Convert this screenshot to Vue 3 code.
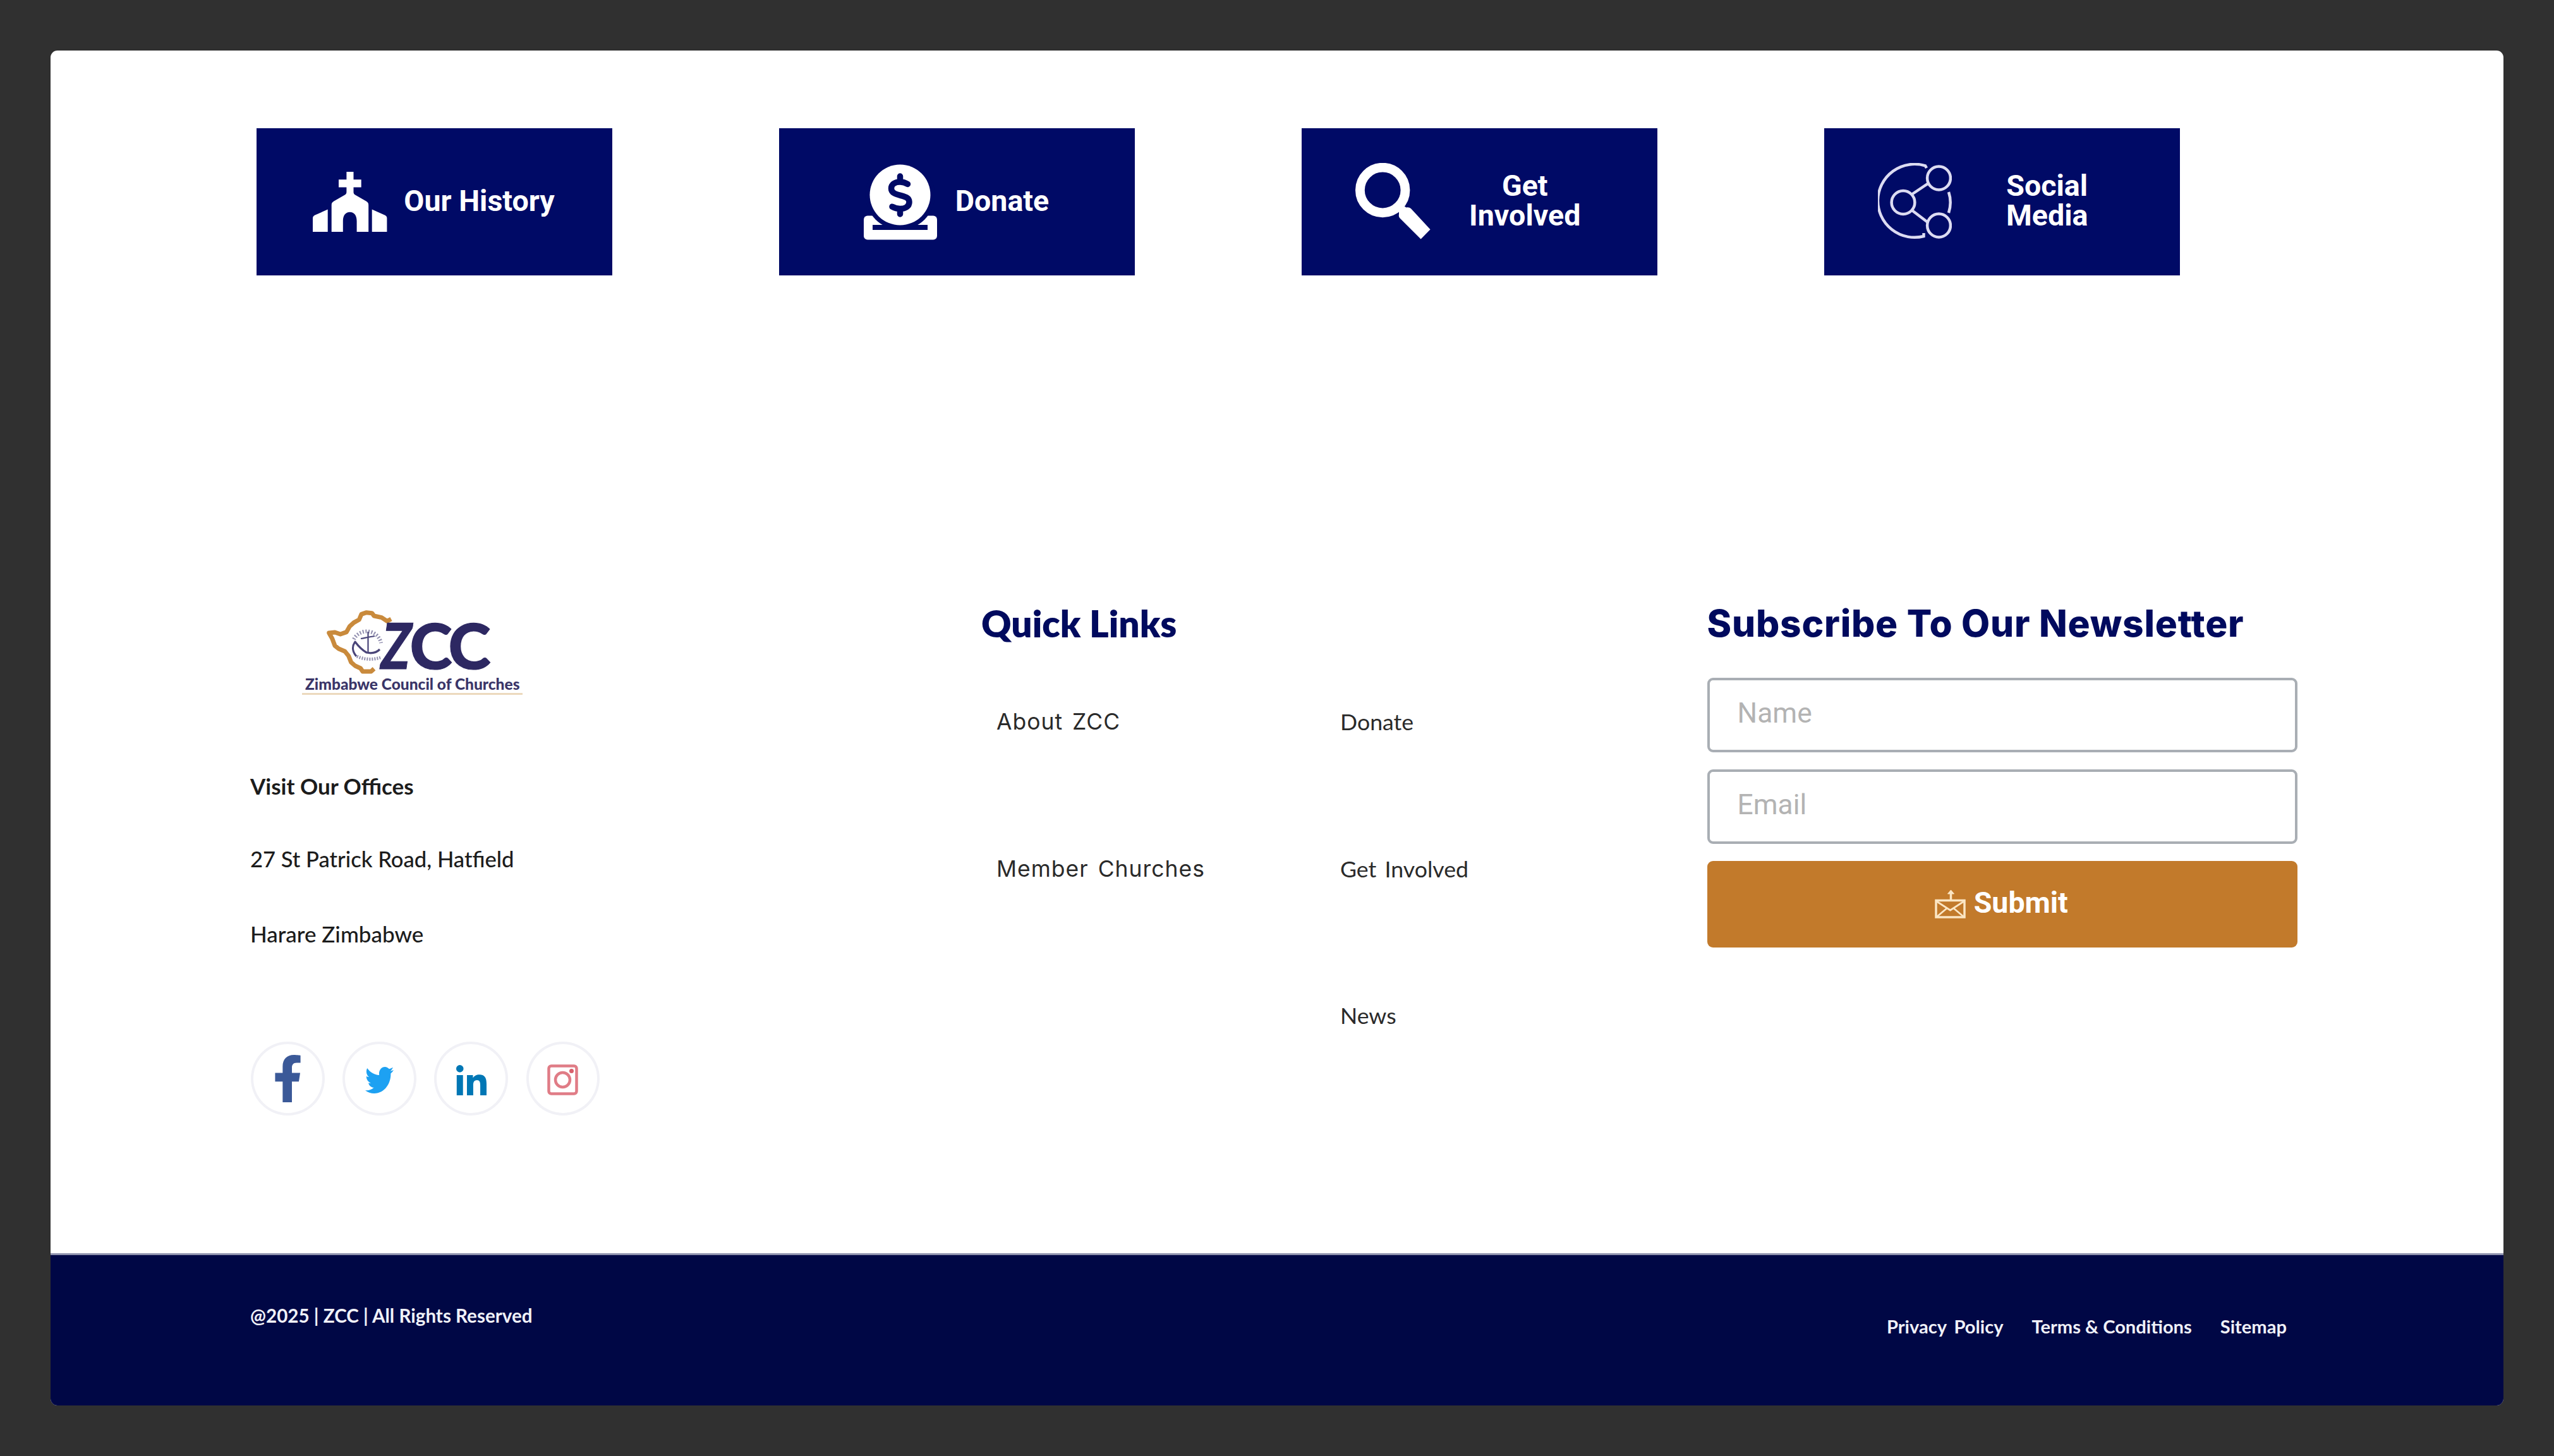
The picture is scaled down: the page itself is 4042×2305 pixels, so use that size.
<script setup>
const links = [
  { about: 'About ZCC', other: 'Donate' },
  { about: 'Member Churches', other: 'Get Involved' },
  { about: '', other: 'News' },
]
const legal = ['Privacy Policy', 'Terms & Conditions', 'Sitemap']
</script>

<template>
  <div class="page">
    <main class="panel">
      <section class="cards">
        <a class="card history">
          <svg width="118" height="95" viewBox="0 0 118 95" fill="#fff">
            <path d="M53.4 0h11.1v12.3h12.2v12.3H64.5v7.6c0 2 1 3.200 2.600 4.200L84.500 46.500c2.600 1.500 3.700 3.200 3.700 6V95H69.600V78c0-9-4-14.300-10.900-14.300S47.800 69 47.800 78v17H29.700V52.500c0-2.800 1.100-4.500 3.700-6L50.800 36.400c1.600-1 2.600-2.200 2.600-4.200v-7.600H41V12.300h12.400z" />
            <path d="M23.700 59.500V95H0V73.500c0-2.300.9-3.600 3-4.700z" />
            <path d="M93.700 59.500V95h23.700V73.500c0-2.300-.9-3.600-3-4.700z" />
          </svg>
          <span>Our History</span>
        </a>
        <a class="card donate">
          <svg width="116" height="120" viewBox="0 0 116 120">
            <rect x="0" y="81.500" width="116" height="38" rx="6" fill="#fff" />
            <circle cx="57.500" cy="48.500" r="55" fill="#000a66" />
            <rect x="14" y="96" width="87" height="8" fill="#000a66" />
            <circle cx="57.500" cy="48.500" r="48" fill="#fff" />
            <path d="M69.500 31.500c-4-2.600-8-3.600-12-3.600-8.500 0-14 4.200-14 10.300 0 14.300 28.500 8 28.500 21.500 0 7-6 10.800-14.500 10.800-5 0-8.500-1-12.500-3.300M57.500 19v8M57.500 71v8" fill="none" stroke="#000a66" stroke-width="9.500" stroke-linecap="round" stroke-linejoin="round" />
          </svg>
          <span>Donate</span>
        </a>
        <a class="card involved">
          <svg width="119" height="121" viewBox="0 0 119 121">
            <circle cx="43.200" cy="43" r="35.800" fill="none" stroke="#fff" stroke-width="14.800" />
            <path d="M69 75l8-7 3.500 2.500c3-.8 5.500-.2 7.800 2L118.600 105.300l-15 15.200L71 88c-2-2-2.600-4.200-2-7z" fill="#fff" />
          </svg>
          <span>Get<br>Involved</span>
        </a>
        <a class="card social">
          <svg width="117" height="121" viewBox="0 0 117 121" fill="none" stroke="#dcdcf2" stroke-width="4.500">
            <path d="M77 8l-2-3.600A58 58 0 1 0 72.500 116v-5" />
            <path d="M112 46c3.600 11 3.600 22 0 33" />
            <circle cx="96.500" cy="24" r="18.400" />
            <circle cx="40" cy="62.500" r="18.400" />
            <circle cx="96.500" cy="99" r="18.400" />
            <path d="M54 49.500L80 32M54 75l25 19" />
          </svg>
          <span>Social<br>Media</span>
        </a>
      </section>

      <section class="info">
        <div class="about">
          <svg class="logo" width="350" height="145" viewBox="478 960 350 145">
            <path transform="translate(440 930) scale(.33333)" d="M537 150L518 160L492 143L456 135L446 122L420 119L396 127L385 153L360 167L340 185L325 212L296 222L270 213L242 216L257 242L270 277L288 291L318 304L335 325L347 355L366 372L392 384L402 399L442 399L456 386" fill="none" stroke="#c98a3c" stroke-width="21" stroke-linejoin="round" />
            <g fill="none" stroke="#4a4579">
              <path d="M560 1012a23 23 0 0 1 43 6" stroke-width="6" stroke-dasharray="2 2.600" opacity=".6" />
              <path d="M565 1039c10 5 25 6 37 2" stroke-width="5" stroke-dasharray="2 2" opacity=".6" />
              <path d="M582.500 1000v32M571 1011c6-1 14-3 22-4" stroke-width="2.200" />
              <path d="M563 1015c-7 8-5 17 1 24 M562 1016c6 8 11 13 18 17 9 2 16 0 21-5" stroke-width="3.200" />
            </g>
            <g class="mark">
              <text transform="translate(599.500 1058.500) skewX(-8)" textLength="46" lengthAdjust="spacingAndGlyphs">Z</text>
              <text x="648.500" y="1058.500" textLength="67" lengthAdjust="spacingAndGlyphs">C</text>
              <text x="709.500" y="1058.500" textLength="67" lengthAdjust="spacingAndGlyphs">C</text>
            </g>
            <text class="tagline" x="483" y="1091.700">Zimbabwe Council of Churches</text>
            <path d="M478 1098.500h349" stroke="#ecd9bd" stroke-width="3" />
          </svg>
          <h3>Visit Our Offices</h3>
          <p class="street">27 St Patrick Road, Hatfield</p>
          <p class="city">Harare Zimbabwe</p>
          <div class="socials">
            <a>
              <svg width="47" height="75" viewBox="0 0 320 512" fill="#3b5998"><path d="M279.140 288l14.220-92.660h-88.910v-60.130c0-25.350 12.420-50.060 52.240-50.060h40.420V6.260S260.430 0 225.360 0c-73.220 0-121.080 44.380-121.080 124.720v70.620H22.890V288h81.390v224h100.170V288z" /></svg>
            </a>
            <a>
              <svg class="low" width="45" height="42" viewBox="0 48 512 416" preserveAspectRatio="none" fill="#1da1f2"><path d="M459.370 151.716c.325 4.548.325 9.097.325 13.645 0 138.720-105.583 298.558-298.558 298.558-59.452 0-114.680-17.219-161.137-47.106 8.447.974 16.568 1.299 25.340 1.299 49.055 0 94.213-16.568 130.274-44.832-46.132-.975-84.792-31.188-98.112-72.772 6.498.974 12.995 1.624 19.818 1.624 9.421 0 18.843-1.300 27.614-3.573-48.081-9.747-84.143-51.980-84.143-102.985v-1.299c13.969 7.797 30.214 12.670 47.431 13.319-28.264-18.843-46.781-51.005-46.781-87.391 0-19.492 5.197-37.360 14.294-52.954 51.655 63.675 129.300 105.258 216.365 109.807-1.624-7.797-2.599-15.918-2.599-24.040 0-57.828 46.782-104.934 104.934-104.934 30.213 0 57.502 12.670 76.670 33.137 23.715-4.548 46.456-13.320 66.599-25.340-7.798 24.366-24.366 44.833-46.132 57.827 21.117-2.273 41.584-8.122 60.426-16.243-14.292 20.791-32.161 39.308-52.628 54.253z" /></svg>
            </a>
            <a>
              <svg class="low" width="48" height="48" viewBox="0 0 448 448" fill="#0077b5"><path d="M100.280 448H7.400V148.900h92.880zM53.790 108.100C24.090 108.100 0 83.500 0 53.800a53.790 53.790 0 0 1 107.580 0c0 29.700-24.100 54.300-53.790 54.300zM447.900 448h-92.680V302.400c0-34.700-.7-79.200-48.290-79.200-48.290 0-55.690 37.700-55.690 76.700V448h-92.780V148.900h89.080v40.800h1.300c12.400-23.500 42.690-48.300 87.880-48.300 94 0 111.280 61.900 111.280 142.300V448z" /></svg>
            </a>
            <a>
              <svg class="low" width="49" height="49" viewBox="0 0 49 49" fill="none" stroke="#e07c86" stroke-width="4.500"><rect x="2.500" y="2.500" width="44" height="44" rx="4" /><circle cx="24.500" cy="24.500" r="11.500" /><circle cx="38.500" cy="10.500" r="3.500" fill="#d9606c" stroke="none" /></svg>
            </a>
          </div>
        </div>

        <nav class="quick">
          <h2>Quick Links</h2>
          <div class="links">
            <template v-for="row in links" :key="row.other">
              <a class="wide">{{ row.about }}</a>
              <a class="plain">{{ row.other }}</a>
            </template>
          </div>
        </nav>

        <form class="newsletter" @submit.prevent>
          <h2>Subscribe To Our Newsletter</h2>
          <input type="text" placeholder="Name">
          <input type="email" placeholder="Email">
          <button type="submit">
            <svg width="49" height="46" viewBox="0 0 49 46" fill="none" stroke="#fbe6c4" stroke-width="3.500">
              <rect x="2" y="17.500" width="45" height="26.500" />
              <path d="M3 19l21.500 14L46 19M3 43.500l16-13.500M46 43.500L30 30" stroke-width="2.800" />
              <path d="M25.500 17V6" />
              <path d="M25.500 1l5 6h-10z" fill="#fbe6c4" stroke-width="1" />
            </svg>
            <span>Submit</span>
          </button>
        </form>
      </section>

      <footer class="bar">
        <p>@2025 | ZCC | All Rights Reserved</p>
        <nav>
          <a v-for="item in legal" :key="item">{{ item }}</a>
        </nav>
      </footer>
    </main>
  </div>
</template>

<style>
body {
  margin: 0;
  background: #303030;
}
</style>

<style scoped>
.page {
  box-sizing: border-box;
  width: 4042px;
  height: 2305px;
  padding: 80px;
  background: #303030;
}
.panel {
  display: flex;
  flex-direction: column;
  height: 2145px;
  border-radius: 11px;
  overflow: hidden;
  background: #fff;
  font-family: Lato, "Liberation Sans", sans-serif;
}
h2, h3, p {
  margin: 0;
}
svg {
  display: block;
  flex: none;
}

.cards {
  display: flex;
  gap: 264px;
  padding: 123px 0 0 326.300px;
}
.card {
  box-sizing: border-box;
  display: flex;
  align-items: center;
  width: 562.900px;
  height: 233px;
  background: #000a66;
  color: #fff;
  font: 700 46.600px/46.700px Roboto, sans-serif;
  text-align: center;
  white-space: nowrap;
}
.card span {
  margin-bottom: 3px;
}
.history { padding-left: 88.500px; gap: 26.500px; }
.donate { padding-left: 133.500px; gap: 29px; }
.involved { padding-left: 84.500px; gap: 61.500px; }
.involved svg, .social svg { margin-bottom: 3px; }
.social { padding-left: 85px; gap: 86px; }

.info {
  display: grid;
  grid-template-columns: 1156px 1149.600px 934.400px;
  align-items: start;
  padding: 514px 0 0 316px;
}
.logo {
  margin: 10px 0 0 82px;
  overflow: visible;
}
.mark text {
  font: 900 100px Lato, sans-serif;
  fill: #2d2862;
  stroke: #2d2862;
  stroke-width: 1.200px;
}
.tagline {
  font: 900 24.500px Lato, sans-serif;
  fill: #3a3568;
}
.about h3, .about p {
  color: #1c1c1c;
  font-size: 35px;
  line-height: 42px;
}
.about h3 {
  margin-top: 118px;
  font-weight: 700;
}
.about p {
  font-weight: 500;
}
.about .street {
  margin-top: 74px;
  font-size: 34.600px;
}
.about .city { margin-top: 76px; }
.socials {
  display: flex;
  gap: 28.700px;
  margin: 149.500px 0 0 1px;
}
.socials a {
  box-sizing: border-box;
  display: flex;
  align-items: center;
  justify-content: center;
  width: 116.500px;
  height: 117px;
  border: 4px solid #f1f1f6;
  border-radius: 50%;
}
.socials .low {
  margin-top: 5px;
}

.quick h2 {
  margin: 1px 0 0 1px;
  color: #000a5e;
  font-weight: 800;
  font-size: 58.500px;
  line-height: 70px;
}
.links {
  display: grid;
  grid-template-columns: 544px auto;
  grid-auto-rows: 232.500px;
  margin-top: 99px;
  padding-left: 25px;
  color: #2a2a2a;
  line-height: 46px;
}
.wide {
  font-family: Inter, sans-serif;
  font-size: 35.500px;
  letter-spacing: 1px;
  word-spacing: 4px;
}
.plain {
  font-size: 35.700px;
  word-spacing: 4px;
}

.newsletter {
  display: flex;
  flex-direction: column;
}
.newsletter h2 {
  margin: 2px 0 51px;
  color: #000a5e;
  font: 800 58.500px/70px Inter, sans-serif;
  letter-spacing: 0.800px;
  white-space: nowrap;
}
.newsletter input {
  box-sizing: border-box;
  width: 100%;
  height: 118px;
  margin: 0 0 27px;
  padding: 0 44px 6px;
  border: 4.500px solid #a9aeb4;
  border-radius: 9px;
  outline: none;
  background: #fff;
  font: 400 44.300px Roboto, sans-serif;
}
.newsletter input::placeholder {
  color: #b3b3b3;
  opacity: 1;
}
.newsletter button {
  display: flex;
  align-items: center;
  justify-content: center;
  gap: 13px;
  height: 137px;
  padding: 0 3px 2px 0;
  border: 0;
  border-radius: 9px;
  background: #c27a2b;
  color: #fff;
  font: 700 46.500px Roboto, sans-serif;
}
.newsletter button span {
  margin-bottom: 3px;
}

.bar {
  box-sizing: border-box;
  display: flex;
  justify-content: space-between;
  height: 241px;
  margin-top: auto;
  padding: 0 343px 0 316px;
  border-top: 3px solid #8f92ad;
  background: #000745;
  color: #f0f1f8;
  font-weight: 700;
  line-height: 36px;
}
.bar p {
  margin-top: 77.500px;
  font-size: 29.600px;
}
.bar nav {
  display: flex;
  gap: 45px;
  margin-top: 95px;
  font-size: 29.100px;
}
.bar nav a:first-child {
  word-spacing: 5px;
}
</style>
